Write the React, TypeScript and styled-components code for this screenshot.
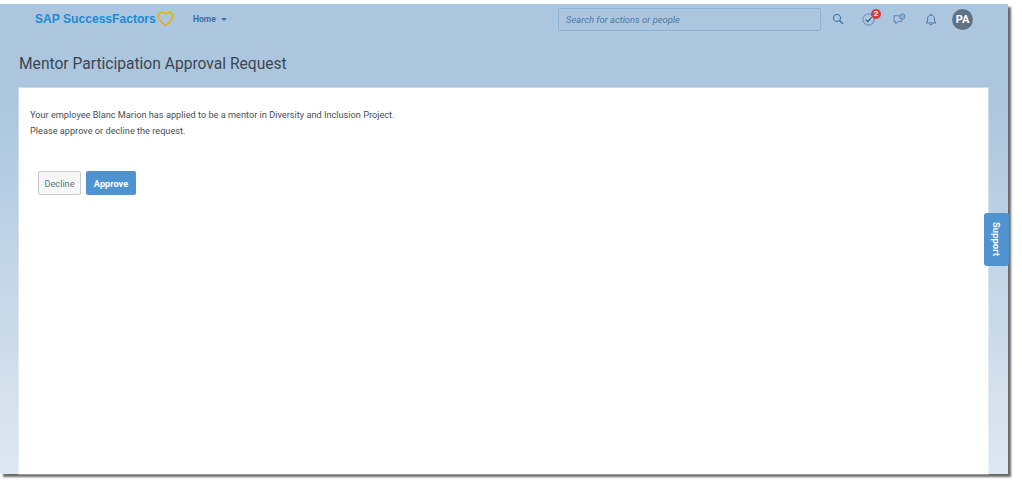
import React, {FC} from 'react';
import styled, {createGlobalStyle} from 'styled-components';

const GlobalStyle = createGlobalStyle`
  html {
    overflow: hidden;
  }

  body {
    margin: 0;
    padding: 0;
    min-height: 492px;
    background: #ffffff;
    font-family: Roboto, "Open Sans", sans-serif;
  }

  #root {
    padding-top: 4px;
  }
`;

const App: FC = () => (
    <>
        <GlobalStyle/>
        <Frame>
            <Header>
                <Logo>
                    <LogoText>SAP SuccessFactors</LogoText>
                    <svg width="17" height="16" viewBox="0 0 17 16" fill="none">
                        <path d="M8.5 14.6C5 11.8 1.2 8.9 1.2 5.2C1.2 3 2.9 1.4 4.9 1.4C6.3 1.4 7.7 2 8.5 3.2C9.3 2 10.7 1.4 12.1 1.4C14.1 1.4 15.8 3 15.8 5.2C15.8 8.9 12 11.8 8.5 14.6Z"
                              stroke="#f0ab00" strokeWidth="1.4" strokeLinejoin="round"/>
                    </svg>
                </Logo>
                <HomeMenu>
                    Home
                    <Caret/>
                </HomeMenu>
                <Search>Search for actions or people</Search>
                <Tools>
                    <ToolIcon>
                        <svg width="12" height="12" viewBox="0 0 12 12" fill="none" stroke="#3f6f9f" strokeWidth="1">
                            <circle cx="5" cy="5" r="3.6"/>
                            <path d="M7.7 7.7L11 11" strokeWidth="1.4"/>
                        </svg>
                    </ToolIcon>
                    <ToolIcon>
                        <svg width="13" height="13" viewBox="0 0 13 13" fill="none" stroke="#4f7fae" strokeWidth=".8">
                            <circle cx="6.5" cy="6.5" r="5.6"/>
                            <path d="M3.8 6.6L5.8 8.6L9.6 4.4" stroke="#2f5f8f" strokeWidth="1.3"/>
                        </svg>
                        <Badge>2</Badge>
                    </ToolIcon>
                    <ToolIcon>
                        <svg width="13" height="12" viewBox="0 0 13 12" fill="none" stroke="#4f7fae" strokeWidth=".9">
                            <path d="M6.6 2.8H1V8.6H2.8V10.8L5 8.6H8.6V6.4"/>
                            <circle cx="9.4" cy="3.6" r="2.7" fill="#8fb0cf"/>
                        </svg>
                    </ToolIcon>
                    <ToolIcon>
                        <svg width="12" height="13" viewBox="0 0 12 13" fill="none" stroke="#3f6f9f" strokeWidth=".9">
                            <path d="M1.2 10C2.4 8.8 2.6 7.6 2.6 5.8C2.6 3.6 4 2 6 2C8 2 9.4 3.6 9.4 5.8C9.4 7.6 9.6 8.8 10.8 10Z"/>
                            <path d="M4.8 11.6H7.2M6 .6V2"/>
                        </svg>
                    </ToolIcon>
                    <Avatar>PA</Avatar>
                </Tools>
            </Header>
            <Title>Mentor Participation Approval Request</Title>
            <Card>
                <Message>Your employee Blanc Marion has applied to be a mentor in Diversity and Inclusion Project.</Message>
                <Message>Please approve or decline the request.</Message>
                <Actions>
                    <DeclineButton>Decline</DeclineButton>
                    <ApproveButton>Approve</ApproveButton>
                </Actions>
            </Card>
            <SupportTab>Support</SupportTab>
        </Frame>
    </>
);

export default App;

const Frame = styled.div`
  position: relative;
  box-sizing: border-box;
  width: 1008px;
  height: 470px;
  padding-left: 19px;
  display: flex;
  flex-direction: column;
  background: linear-gradient(180deg, #abc6de 0, #abc6de 90px, #dfe7f0 100%);
  box-shadow: 3px 3px 2px #6a6a6a;
`;

const Header = styled.header`
  display: flex;
  align-items: center;
  height: 30px;
  margin-left: -19px;
  padding-left: 35px;
`;

const Logo = styled.div`
  display: flex;
  align-items: center;
  gap: 1px;
  width: 158px;
`;

const LogoText = styled.span`
  font-family: "Liberation Sans", Arial, sans-serif;
  font-size: 12.1px;
  font-weight: 700;
  color: #1b8bd4;
  white-space: nowrap;
`;

const HomeMenu = styled.div`
  display: flex;
  align-items: center;
  gap: 5px;
  width: 365px;
  font-size: 8.5px;
  font-weight: 700;
  color: #3f6f9f;
`;

const Caret = styled.span`
  border-left: 3px solid transparent;
  border-right: 3px solid transparent;
  border-top: 3px solid #3f6f9f;
`;

const Search = styled.div`
  box-sizing: border-box;
  width: 263px;
  height: 23px;
  padding-left: 7px;
  display: flex;
  align-items: center;
  border: 1px solid #8fb2d2;
  border-radius: 2px;
  font-size: 9.4px;
  font-style: italic;
  color: #4c7aa6;
`;

const Tools = styled.div`
  display: flex;
  align-items: center;
  margin-left: 1px;
`;

const ToolIcon = styled.div`
  position: relative;
  display: flex;
  justify-content: center;
  width: 31px;
`;

const Badge = styled.span`
  position: absolute;
  top: -4px;
  left: 18px;
  width: 10px;
  height: 10px;
  border-radius: 50%;
  background: #dc3a3a;
  color: #ffffff;
  font-size: 8px;
  font-weight: 700;
  line-height: 10px;
  text-align: center;
`;

const Avatar = styled.div`
  width: 21px;
  height: 21px;
  margin-left: 6px;
  border-radius: 50%;
  background: #5f7285;
  color: #ffffff;
  font-size: 11px;
  font-weight: 700;
  line-height: 21px;
  text-align: center;
`;

const Title = styled.h1`
  margin: 0;
  padding-top: 21px;
  height: 33px;
  font-size: 15.6px;
  line-height: 18px;
  font-weight: 400;
  color: #3d4650;
`;

const Card = styled.main`
  flex: 1;
  width: 969px;
  box-sizing: border-box;
  padding: 19px 11px 0;
  background: #ffffff;
  box-shadow: 0 0 0 1px rgba(255, 255, 255, .35);
`;

const Message = styled.p`
  margin: 0;
  font-size: 9.2px;
  line-height: 16px;
  color: #4a4f55;
`;

const Actions = styled.div`
  display: flex;
  gap: 5px;
  margin: 32px 0 0 8px;
`;

const DeclineButton = styled.button`
  box-sizing: border-box;
  width: 43px;
  height: 24px;
  padding: 0;
  border: 1px solid #c6c8ca;
  border-radius: 2px;
  background: #f7f7f7;
  color: #5f7488;
  font-family: inherit;
  font-size: 9.2px;
`;

const ApproveButton = styled.button`
  box-sizing: border-box;
  width: 50px;
  height: 24px;
  padding: 0;
  border: 0;
  border-radius: 2px;
  background: #4f93d0;
  color: #ffffff;
  font-family: inherit;
  font-size: 9.2px;
  font-weight: 700;
`;

const SupportTab = styled.div`
  position: absolute;
  top: 209px;
  right: -1px;
  box-sizing: border-box;
  width: 25px;
  height: 53px;
  display: flex;
  align-items: center;
  justify-content: center;
  writing-mode: vertical-rl;
  border-radius: 3px;
  background: #4f93d0;
  color: #ffffff;
  font-size: 9.5px;
  font-weight: 700;
`;
